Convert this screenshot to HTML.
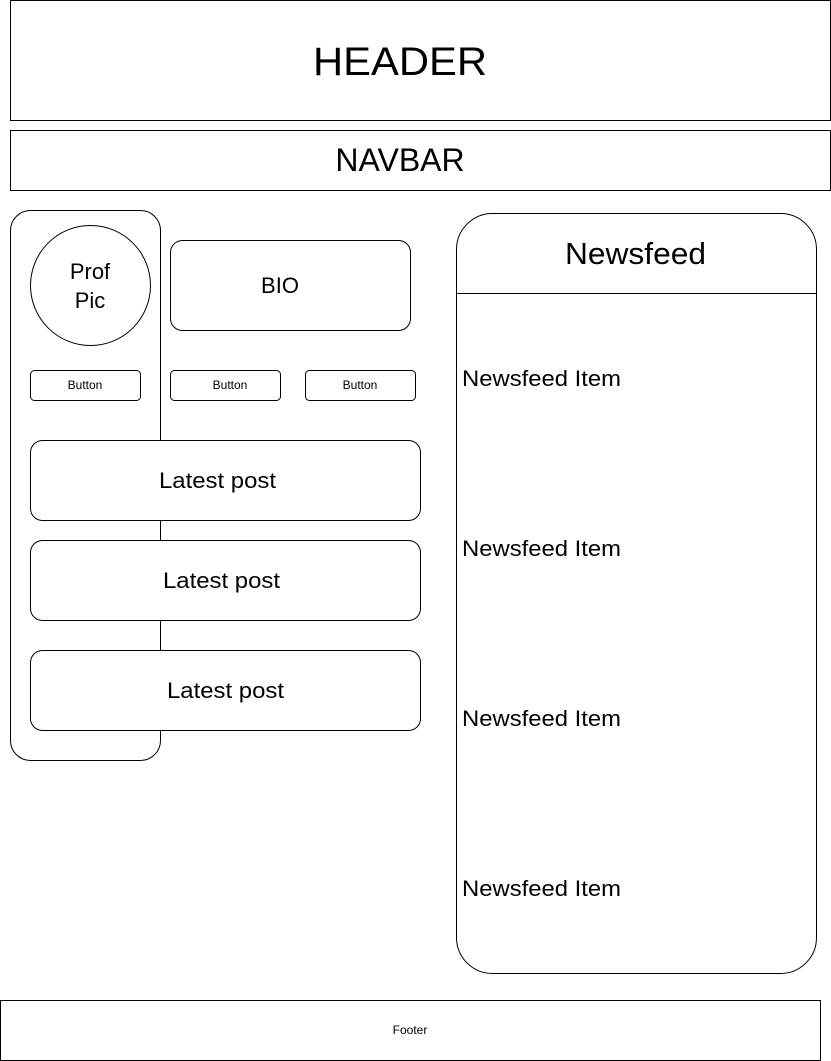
<!DOCTYPE html>
<html><head><style>
html,body{margin:0;padding:0;background:#fff;width:831px;height:1061px;overflow:hidden}
svg{display:block}
text{font-family:"Liberation Sans",Arial,sans-serif;fill:#000}
</style></head><body>
<svg width="831" height="1061" viewBox="0 0 831 1061" xmlns="http://www.w3.org/2000/svg">
<g fill="#fff" stroke="#000" stroke-width="1">
<rect x="10.5" y="0.5" width="820" height="120"/>
<rect x="10.5" y="130.5" width="820" height="60"/>
<rect x="10.5" y="210.5" width="150" height="550" rx="20" ry="20"/>
<circle cx="90.5" cy="285.5" r="60"/>
<rect x="170.5" y="240.5" width="240" height="90" rx="12" ry="12"/>
<rect x="30.5" y="370.5" width="110" height="30" rx="4" ry="4"/>
<rect x="170.5" y="370.5" width="110" height="30" rx="4" ry="4"/>
<rect x="305.5" y="370.5" width="110" height="30" rx="4" ry="4"/>
<rect x="30.5" y="440.5" width="390" height="80" rx="12" ry="12"/>
<rect x="30.5" y="540.5" width="390" height="80" rx="12" ry="12"/>
<rect x="30.5" y="650.5" width="390" height="80" rx="12" ry="12"/>
<rect x="456.5" y="213.5" width="360" height="760" rx="36" ry="36"/>
<line x1="456.5" y1="293.5" x2="816.5" y2="293.5"/>
<rect x="0.5" y="1000.5" width="820" height="60"/>
</g>
<text x="313" y="75" font-size="40" textLength="174" lengthAdjust="spacingAndGlyphs">HEADER</text>
<text x="400" y="171" font-size="32" text-anchor="middle">NAVBAR</text>
<text x="90" y="279" font-size="22" text-anchor="middle">Prof</text>
<text x="90" y="308" font-size="22" text-anchor="middle">Pic</text>
<text x="280" y="293" font-size="22" text-anchor="middle">BIO</text>
<text x="85" y="389" font-size="12" text-anchor="middle">Button</text>
<text x="230" y="389" font-size="12" text-anchor="middle">Button</text>
<text x="360" y="389" font-size="12" text-anchor="middle">Button</text>
<text x="159" y="488" font-size="22" textLength="117" lengthAdjust="spacingAndGlyphs">Latest post</text>
<text x="163" y="588" font-size="22" textLength="117" lengthAdjust="spacingAndGlyphs">Latest post</text>
<text x="167" y="698" font-size="22" textLength="117" lengthAdjust="spacingAndGlyphs">Latest post</text>
<text x="565" y="264" font-size="31" textLength="141" lengthAdjust="spacingAndGlyphs">Newsfeed</text>
<text x="462" y="386" font-size="22" textLength="159" lengthAdjust="spacingAndGlyphs">Newsfeed Item</text>
<text x="462" y="556" font-size="22" textLength="159" lengthAdjust="spacingAndGlyphs">Newsfeed Item</text>
<text x="462" y="726" font-size="22" textLength="159" lengthAdjust="spacingAndGlyphs">Newsfeed Item</text>
<text x="462" y="896" font-size="22" textLength="159" lengthAdjust="spacingAndGlyphs">Newsfeed Item</text>
<text x="410" y="1034" font-size="12" text-anchor="middle">Footer</text>
</svg>
</body></html>
